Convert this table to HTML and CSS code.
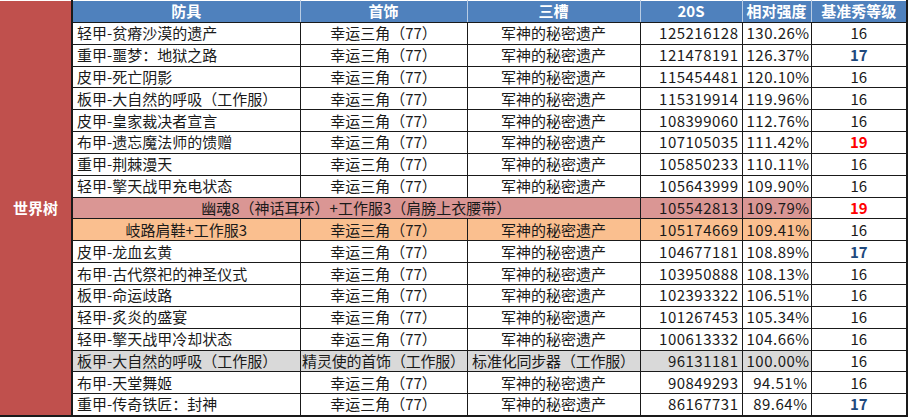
FILE: index.html
```html
<!DOCTYPE html>
<html lang="zh-CN">
<head>
<meta charset="utf-8">
<title>世界树</title>
<link rel="stylesheet" href="styles.css">
</head>
<body>
<table class="sheet">
  <colgroup>
    <col class="c-side"><col class="c-armor"><col class="c-acc"><col class="c-slot"><col class="c-dmg"><col class="c-rel"><col class="c-lvl">
  </colgroup>
  <tr class="head">
    <td class="side" rowspan="19">世界树</td>
    <th>防具</th><th>首饰</th><th>三槽</th><th>20S</th><th>相对强度</th><th>基准秀等级</th>
  </tr>
  <tr><td class="l">轻甲-贫瘠沙漠的遗产</td><td class="c">幸运三角（77）</td><td class="c">军神的秘密遗产</td><td class="r">125216128</td><td class="r">130.26%</td><td class="c">16</td></tr>
  <tr><td class="l">重甲-噩梦：地狱之路</td><td class="c">幸运三角（77）</td><td class="c">军神的秘密遗产</td><td class="r">121478191</td><td class="r">126.37%</td><td class="c blue">17</td></tr>
  <tr><td class="l">皮甲-死亡阴影</td><td class="c">幸运三角（77）</td><td class="c">军神的秘密遗产</td><td class="r">115454481</td><td class="r">120.10%</td><td class="c">16</td></tr>
  <tr><td class="l">板甲-大自然的呼吸（工作服）</td><td class="c">幸运三角（77）</td><td class="c">军神的秘密遗产</td><td class="r">115319914</td><td class="r">119.96%</td><td class="c">16</td></tr>
  <tr><td class="l">皮甲-皇家裁决者宣言</td><td class="c">幸运三角（77）</td><td class="c">军神的秘密遗产</td><td class="r">108399060</td><td class="r">112.76%</td><td class="c">16</td></tr>
  <tr><td class="l">布甲-遗忘魔法师的馈赠</td><td class="c">幸运三角（77）</td><td class="c">军神的秘密遗产</td><td class="r">107105035</td><td class="r">111.42%</td><td class="c red">19</td></tr>
  <tr><td class="l">重甲-荆棘漫天</td><td class="c">幸运三角（77）</td><td class="c">军神的秘密遗产</td><td class="r">105850233</td><td class="r">110.11%</td><td class="c">16</td></tr>
  <tr><td class="l">轻甲-擎天战甲充电状态</td><td class="c">幸运三角（77）</td><td class="c">军神的秘密遗产</td><td class="r">105643999</td><td class="r">109.90%</td><td class="c">16</td></tr>
  <tr class="pink"><td class="c hl" colspan="3">幽魂8（神话耳环）+工作服3（肩膀上衣腰带）</td><td class="r hl">105542813</td><td class="r hl">109.79%</td><td class="c red">19</td></tr>
  <tr class="orange"><td class="c hl">岐路肩鞋+工作服3</td><td class="c hl">幸运三角（77）</td><td class="c hl">军神的秘密遗产</td><td class="r hl">105174669</td><td class="r hl">109.41%</td><td class="c">16</td></tr>
  <tr><td class="l">皮甲-龙血玄黄</td><td class="c">幸运三角（77）</td><td class="c">军神的秘密遗产</td><td class="r">104677181</td><td class="r">108.89%</td><td class="c blue">17</td></tr>
  <tr><td class="l">布甲-古代祭祀的神圣仪式</td><td class="c">幸运三角（77）</td><td class="c">军神的秘密遗产</td><td class="r">103950888</td><td class="r">108.13%</td><td class="c">16</td></tr>
  <tr><td class="l">板甲-命运歧路</td><td class="c">幸运三角（77）</td><td class="c">军神的秘密遗产</td><td class="r">102393322</td><td class="r">106.51%</td><td class="c">16</td></tr>
  <tr><td class="l">轻甲-炙炎的盛宴</td><td class="c">幸运三角（77）</td><td class="c">军神的秘密遗产</td><td class="r">101267453</td><td class="r">105.34%</td><td class="c">16</td></tr>
  <tr><td class="l">轻甲-擎天战甲冷却状态</td><td class="c">幸运三角（77）</td><td class="c">军神的秘密遗产</td><td class="r">100613332</td><td class="r">104.66%</td><td class="c">16</td></tr>
  <tr class="gray"><td class="l hl">板甲-大自然的呼吸（工作服）</td><td class="c hl tight">精灵使的首饰（工作服）</td><td class="c hl tight">标准化同步器（工作服）</td><td class="r hl">96131181</td><td class="r hl">100.00%</td><td class="c">16</td></tr>
  <tr><td class="l">布甲-天堂舞姬</td><td class="c">幸运三角（77）</td><td class="c">军神的秘密遗产</td><td class="r">90849293</td><td class="r">94.51%</td><td class="c">16</td></tr>
  <tr class="last"><td class="l">重甲-传奇铁匠：封神</td><td class="c">幸运三角（77）</td><td class="c">军神的秘密遗产</td><td class="r">86167731</td><td class="r">89.64%</td><td class="c blue">17</td></tr>
</table>
</body>
</html>
```
FILE: styles.css
```css
html, body {
  margin: 0;
  padding: 0;
  background: #ffffff;
}

.sheet {
  border-collapse: collapse;
  table-layout: fixed;
  width: 907px;
  font-family: "Noto Sans CJK SC", "Noto Sans", sans-serif;
  font-size: 15px;
  color: #1a1a1a;
  margin-top: 0;
}

.c-side { width: 72px; }
.c-armor { width: 228px; }
.c-acc { width: 167px; }
.c-slot { width: 173px; }
.c-dmg { width: 102px; }
.c-rel { width: 69px; }
.c-lvl { width: 96px; }

.sheet tr {
  height: 21.85px;
}

.sheet td, .sheet th {
  padding: 0 4px;
  line-height: 20px;
  border: 1px solid #1a1a1a;
  white-space: nowrap;
  overflow: hidden;
  vertical-align: middle;
}

.sheet th {
  background: #4f81bd;
  color: #ffffff;
  font-weight: bold;
  border-top: 1px solid #ffffff;
  border-left: 1px solid #b8cce4;
  border-right: 1px solid #b8cce4;
  border-bottom: 1px solid #1a1a1a;
}

.sheet th:last-child {
  border-right: 2px solid #1a1a1a;
}

.sheet td:last-child {
  border-right: 2px solid #1a1a1a;
}

.sheet .side {
  background: #c0504d;
  color: #ffffff;
  font-weight: bold;
  text-align: center;
  border: none;
  border-right: 2px solid #1a1a1a;
  border-bottom: 2px solid #1a1a1a;
  padding: 0;
}

.sheet .last td {
  border-bottom: 2px solid #1a1a1a;
}

.l { text-align: left; padding-left: 5px; }
.c { text-align: center; }
.r { text-align: right; letter-spacing: 0.5px; }

.sheet td.r { padding-right: 3px; }

.sheet td.tight {
  padding: 0;
  overflow: visible;
  letter-spacing: -0.2px;
}

.blue { color: #1f497d; font-weight: bold; }
.red { color: #ff0000; font-weight: bold; }

.pink .hl { background: #da9694; }
.orange .hl { background: #fabf8f; }
.gray .hl { background: #d9d9d9; }
```
